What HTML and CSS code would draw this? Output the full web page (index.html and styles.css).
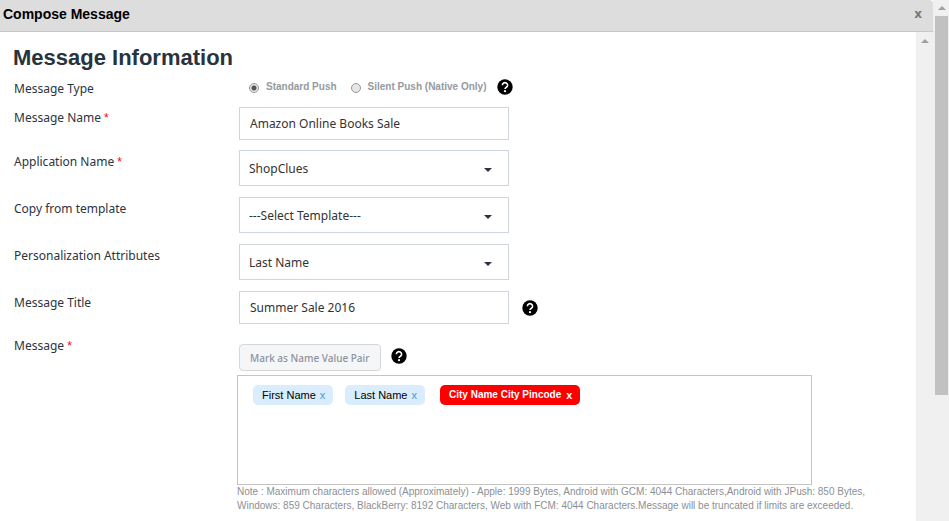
FILE: index.html
```html
<!DOCTYPE html>
<html lang="en">
<head>
<meta charset="utf-8">
<title>Compose Message</title>
<meta name="viewport" content="width=device-width, initial-scale=1">
<link rel="stylesheet" href="styles.css">
</head>
<body>
<svg class="sprite" aria-hidden="true">
  <symbol id="help" viewBox="0 0 16 16">
    <circle cx="8" cy="8" r="7.7" fill="#000"/>
    <path d="M5.4 6.2a2.6 2.5 0 1 1 4 2.1C8.4 8.9 8 9.2 8 10.1" fill="none" stroke="#fff" stroke-width="1.6"/>
    <circle cx="8" cy="12.2" r="1.1" fill="#fff"/>
  </symbol>
</svg>
<div class="window">
  <div class="dialog">
    <header class="titlebar">
      <h1 class="titlebar-text">Compose Message</h1>
      <button class="close" type="button" aria-label="Close">x</button>
    </header>
    <div class="body">
      <form class="form">
        <h2 class="heading">Message Information</h2>
        <div class="row row-type" role="radiogroup" aria-labelledby="type-label">
          <span class="label" id="type-label">Message Type</span>
          <div class="field">
            <label class="choice"><input class="radio" type="radio" name="type" checked><span>Standard Push</span></label>
            <label class="choice"><input class="radio" type="radio" name="type"><span>Silent Push (Native Only)</span></label>
            <button class="help" type="button" aria-label="Help"><svg class="icon"><use href="#help"/></svg></button>
          </div>
        </div>
        <div class="row row-name">
          <label class="label" for="name">Message Name <span class="required">*</span></label>
          <div class="field"><input class="control text" id="name" type="text" value="Amazon Online Books Sale"></div>
        </div>
        <div class="row">
          <label class="label" for="app">Application Name <span class="required">*</span></label>
          <div class="field"><div class="select-wrap"><select class="control select" id="app"><option>ShopClues</option></select></div></div>
        </div>
        <div class="row">
          <label class="label" for="template">Copy from template</label>
          <div class="field"><div class="select-wrap"><select class="control select" id="template"><option>---Select Template---</option></select></div></div>
        </div>
        <div class="row">
          <label class="label" for="attrs">Personalization Attributes</label>
          <div class="field"><div class="select-wrap"><select class="control select" id="attrs"><option>Last Name</option></select></div></div>
        </div>
        <div class="row row-title">
          <label class="label" for="title">Message Title</label>
          <div class="field"><input class="control text" id="title" type="text" value="Summer Sale 2016"><button class="help help-far" type="button" aria-label="Help"><svg class="icon"><use href="#help"/></svg></button></div>
        </div>
        <div class="row row-message">
          <span class="label" id="message-label">Message <span class="required">*</span></span>
          <div class="field"><button class="mark" type="button">Mark as Name Value Pair</button><button class="help" type="button" aria-label="Help"><svg class="icon"><use href="#help"/></svg></button></div>
        </div>
        <div class="message">
          <div class="editor" role="group" aria-labelledby="message-label">
            <span class="chip">First Name<button class="remove" type="button" aria-label="Remove First Name">x</button></span>
            <span class="chip">Last Name<button class="remove" type="button" aria-label="Remove Last Name">x</button></span>
            <span class="chip chip-error">City Name City Pincode<button class="remove" type="button" aria-label="Remove City Name City Pincode">x</button></span>
          </div>
          <p class="note">Note : Maximum characters allowed (Approximately) - Apple: 1999 Bytes, Android with GCM: 4044 Characters,Android with JPush: 850 Bytes, Windows: 859 Characters, BlackBerry: 8192 Characters, Web with FCM: 4044 Characters.Message will be truncated if limits are exceeded.</p>
        </div>
      </form>
      <div class="scrollbar" aria-hidden="true"><span class="arrow"></span></div>
    </div>
  </div>
  <div class="scrollbar scrollbar-page" aria-hidden="true"><span class="arrow"></span><span class="thumb"></span></div>
</div>
</body>
</html>
```
FILE: styles.css
```css
* { box-sizing: border-box; }

body {
  margin: 0;
  background: #fff;
  color: #2b3440;
  font: 12px/18px "Noto Sans", sans-serif;
}

button, input, select { font: inherit; color: inherit; margin: 0; }
button { border: 0; padding: 0; background: none; cursor: pointer; }

.sprite { display: none; }

.window { display: flex; height: 100vh; overflow: hidden; }
.dialog { flex: 1; min-width: 0; display: flex; flex-direction: column; }

.titlebar {
  display: flex;
  align-items: center;
  justify-content: space-between;
  height: 32px;
  padding: 0 11px 3px 3px;
  border-bottom: 1px solid #c8c8c8;
  border-top-right-radius: 4px;
  background: #ddd;
  font-family: "Liberation Sans", Arial, sans-serif;
}
.titlebar-text { margin: 0; color: #000; font-size: 14px; font-weight: 700; }
.close { color: #777; font: 700 12px/16px "DejaVu Sans", sans-serif; }

.body { flex: 1; min-height: 0; display: flex; }
.form { flex: 1; min-width: 0; padding: 12px 13px; overflow: hidden; }

.heading {
  margin: 0 0 4px;
  color: #28333d;
  font: 700 22px/28px "Liberation Sans", Arial, sans-serif;
}

.row { display: grid; grid-template-columns: 225px 1fr; align-items: start; margin-bottom: 11px; }
.row-type { height: 22px; margin-bottom: 9px; align-items: center; }
.row-name { margin-bottom: 10px; }
.row-title { margin-bottom: 20px; }
.row-message { margin-bottom: 4px; }
.label { padding: 3px 0 0 1px; }
.row-message .label { padding-top: 0; margin-top: -7px; }
.row-name .label { padding-top: 2px; }
.required { color: #f00; font-family: "Liberation Sans", Arial, sans-serif; }
.field { display: flex; align-items: center; padding-left: 1px; }

.choice {
  display: flex;
  align-items: center;
  gap: 7px;
  margin-left: 10px;
  color: #959a9f;
  font: 700 10px/16px "Liberation Sans", Arial, sans-serif;
}
.choice + .choice { margin-left: 14px; }
.radio {
  appearance: none;
  width: 10px;
  height: 10px;
  margin-top: 2px;
  border: 1px solid #999;
  border-radius: 50%;
  background: #e6e6e6;
}
.radio:checked { background: radial-gradient(circle, #555 0 2px, #e6e6e6 3px); }

.help { width: 16px; height: 16px; margin-left: 10px; }
.help-far { margin-left: 13px; }
.icon { display: block; width: 16px; height: 16px; }
.row-message .field { align-items: flex-start; }
.row-message .help { margin-top: 4px; }

.control {
  width: 270px;
  border: 1px solid #cfd6dd;
  border-radius: 0;
  background: #fff;
  color: #333;
}
.text { height: 33px; padding: 0 10px; }
.select-wrap { position: relative; }
.select { appearance: none; display: block; height: 36px; padding: 2px 30px 0 9px; }
.select-wrap::after {
  content: "";
  position: absolute;
  top: 18px;
  right: 17px;
  border: 4px solid transparent;
  border-top-color: #2b3440;
  border-bottom: 0;
  pointer-events: none;
}

.mark {
  height: 27px;
  padding: 0 10px;
  border: 1px solid #d5d7da;
  border-radius: 4px;
  background: #f5f6f8;
  color: #8d939b;
  font-size: 10px;
  font-weight: 500;
}

.message { margin-left: 224px; margin-right: 33px; }
.editor {
  display: flex;
  align-items: flex-start;
  gap: 12px;
  width: 575px;
  max-width: 100%;
  height: 110px;
  padding: 9px 15px;
  border: 1px solid #c4c4c4;
}
.chip {
  display: flex;
  align-items: center;
  gap: 4px;
  height: 20px;
  padding: 0 8px 0 9px;
  border-radius: 5px;
  background: #d9edff;
  color: #000;
  font: 11px/20px "Liberation Sans", Arial, sans-serif;
}
.remove { color: #4a9bd1; }
.chip-error { gap: 5px; margin-left: 3px; background: #f00; color: #fff; font-size: 10px; font-weight: 700; }
.chip-error .remove { color: #fff; font-size: 11px; }

.note {
  margin: 0;
  color: #8b8f94;
  font: 10px/14px "Liberation Sans", Arial, sans-serif;
}

.scrollbar { flex: none; width: 17px; padding-top: 7px; background: #f0f0f0; }
.scrollbar-page { width: 16px; padding: 6px 1px 0 2px; }
.arrow {
  display: block;
  width: 8px;
  margin: 0 auto;
  border: 4px solid transparent;
  border-bottom-color: #a0a0a0;
  border-top: 0;
}
.thumb { display: block; height: 379px; margin-top: 6px; background: #c1c1c1; }
```
